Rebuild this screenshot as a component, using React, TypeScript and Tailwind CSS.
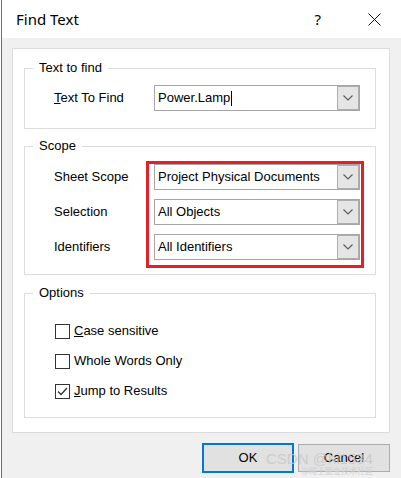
import React from 'react';

const Chevron = () => (
  <svg width="10" height="6" viewBox="0 0 10 6" className="block">
    <path d="M0.5 0.5 L5 5 L9.5 0.5" fill="none" stroke="#5a5a5a" strokeWidth="1.1" />
  </svg>
);

const Combo: React.FC<{ value: string; caret?: boolean }> = ({ value, caret }) => (
  <div className="flex h-[26px] w-[206px] border border-[#a6a6a6] bg-white">
    <div className="flex flex-1 items-center pl-[3px] text-[13px] text-black">
      <span>{value}</span>
      {caret && <span className="ml-px h-[15px] w-px bg-black" />}
    </div>
    <div className="flex w-[22px] items-center justify-center border border-[#adadad] bg-[#e5e5e5]">
      <Chevron />
    </div>
  </div>
);

const Check: React.FC<{ checked?: boolean; children: React.ReactNode }> = ({ checked, children }) => (
  <div className="flex h-[16px] items-center gap-[4px]">
    <div className="flex h-[15px] w-[15px] items-center justify-center border border-[#333] bg-white">
      {checked && (
        <svg width="11" height="9" viewBox="0 0 11 9">
          <path d="M1 4.5 L4 7.5 L10 1" fill="none" stroke="#333" strokeWidth="1.3" />
        </svg>
      )}
    </div>
    <span>{children}</span>
  </div>
);

export default function App() {
  return (
    <div className="relative h-[478px] w-[401px] overflow-hidden bg-white font-['Liberation_Sans',Arial,sans-serif] text-[13px] leading-[16px] text-black">
      <div className="ml-px flex h-full flex-col border-l border-[#707070]">
        {/* title bar */}
        <div className="flex h-[38px] items-center bg-white pl-[14px] pr-[20px]">
          <span className="font-['Noto_Sans',sans-serif] text-[15px]">Find Text</span>
          <span className="ml-auto mr-[47px] font-['Noto_Sans',sans-serif] text-[15px]">?</span>
          <svg width="13" height="13" viewBox="0 0 13 13">
            <path d="M0.5 0.5 L12.5 12.5 M12.5 0.5 L0.5 12.5" stroke="#111" strokeWidth="1" />
          </svg>
        </div>

        {/* body */}
        <div className="flex flex-1 flex-col bg-[#f0f0f0] pl-[10px] pt-[10px]">
          <div className="w-[378px] border border-[#dcdcdc] bg-white pb-[14px] pt-[11px]">
            <fieldset className="ml-[11px] w-[352px] border border-[#dcdcdc]">
              <legend className="ml-[8px] px-[6px]">Text to find</legend>
              <div className="flex items-center pb-[17px] pl-[29px] pt-[9px]">
                <span className="w-[100px]">
                  <u>T</u>ext To Find
                </span>
                <Combo value="Power.Lamp" caret />
              </div>
            </fieldset>

            <fieldset className="ml-[11px] mt-[9px] w-[352px] border border-[#dcdcdc]">
              <legend className="ml-[8px] px-[6px]">Scope</legend>
              <div className="flex items-start pb-[6px] pl-[29px] pt-[7px]">
                <div className="flex w-[92px] flex-col gap-[9px] pt-[3px]">
                  <span className="flex h-[26px] items-center">Sheet Scope</span>
                  <span className="flex h-[26px] items-center">Selection</span>
                  <span className="flex h-[26px] items-center">Identifiers</span>
                </div>
                <div className="flex flex-col gap-[9px] border-[3px] border-[#e0202b] pb-[5px] pl-[5px] pr-px">
                  <Combo value="Project Physical Documents" />
                  <Combo value="All Objects" />
                  <Combo value="All Identifiers" />
                </div>
              </div>
            </fieldset>

            <fieldset className="ml-[11px] mt-[10px] w-[352px] border border-[#dcdcdc]">
              <legend className="ml-[8px] px-[6px]">Options</legend>
              <div className="flex flex-col gap-[14px] pb-[18px] pl-[30px] pt-[22px]">
                <Check>
                  <u>C</u>ase sensitive
                </Check>
                <Check>Whole Words Only</Check>
                <Check checked>
                  <u>J</u>ump to Results
                </Check>
              </div>
            </fieldset>
          </div>

          <div className="mt-[10px] flex w-[378px] items-center justify-end gap-[4px]">
            <button className="h-[30px] w-[92px] border-2 border-[#0078d7] bg-[#e1e1e1] text-[13px]">OK</button>
            <button className="h-[28px] w-[92px] border border-[#adadad] bg-[#e1e1e1] text-[13px]">Cancel</button>
          </div>
        </div>
      </div>

      {/* watermark */}
      <div className="pointer-events-none absolute left-[266px] top-[451px] flex flex-col items-end leading-none">
        <span className="font-['Liberation_Sans',sans-serif] text-[15px] text-[#c8c8c8] opacity-80">CSDN @hi1534</span>
        <span className="mt-px font-['Noto_Sans_CJK_SC',sans-serif] text-[8px] text-[#cfcfcf]">@稀土掘金技术社区</span>
      </div>
    </div>
  );
}
